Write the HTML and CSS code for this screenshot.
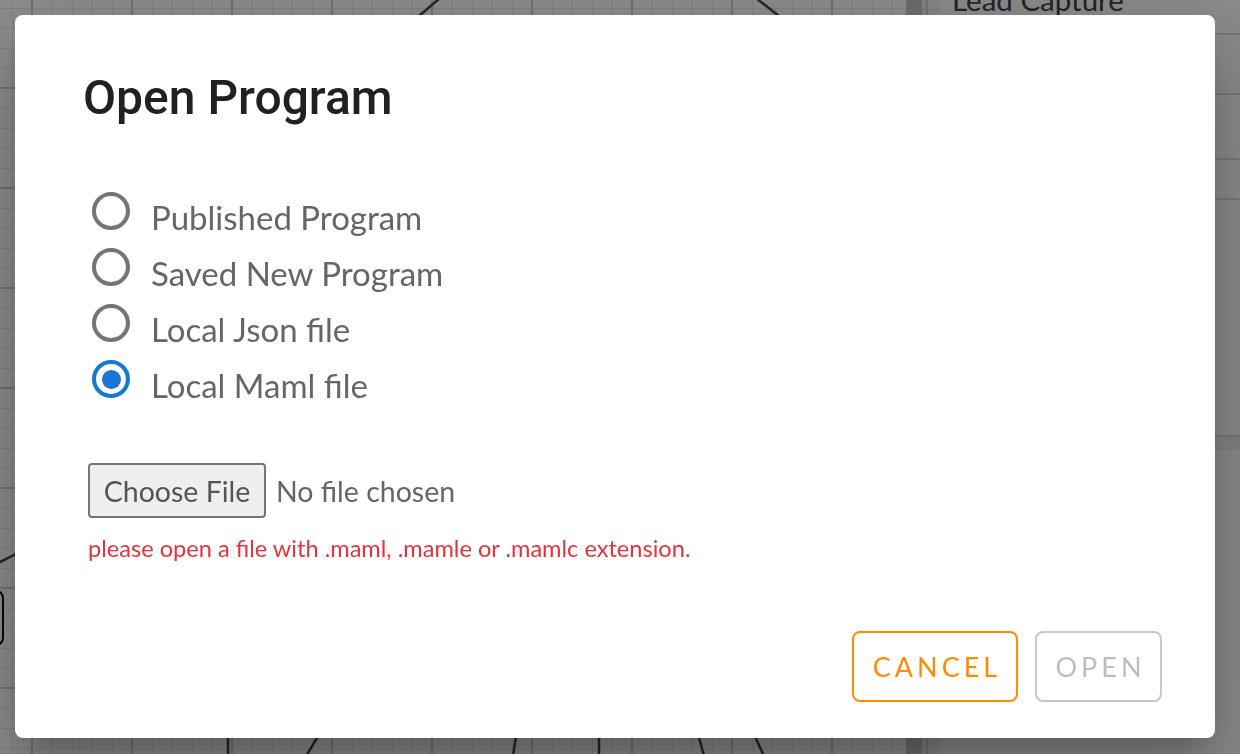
FILE: index.html
```html
<!DOCTYPE html>
<html lang="en">
<head>
<meta charset="utf-8">
<title>Open Program</title>
<link rel="stylesheet" href="styles.css">
</head>
<body>
<div class="app">
  <div class="canvas">
    <svg class="edges" width="906" height="754" viewBox="0 0 906 754">
      <line x1="412" y1="22" x2="440" y2="-2"/>
      <line x1="756" y1="-2" x2="784" y2="20"/>
      <line x1="-2" y1="563" x2="20" y2="552"/>
      <line x1="228" y1="730" x2="228" y2="756"/>
      <line x1="322" y1="730" x2="306" y2="756"/>
      <line x1="517" y1="730" x2="513" y2="756"/>
      <line x1="599" y1="730" x2="599" y2="756"/>
      <line x1="697" y1="730" x2="704" y2="756"/>
      <line x1="752" y1="730" x2="764" y2="756"/>
    </svg>
    <div class="node"></div>
  </div>
  <div class="scroll-strip"></div>
  <aside class="sidebar">
    <div class="side-title">Lead Capture</div>
    <div class="side-row r1"></div>
    <div class="side-row r2"></div>
    <div class="side-row r3"></div>
    <div class="side-row r4"></div>
    <div class="side-band"></div>
  </aside>
</div>

<div class="backdrop">
  <div class="dialog" role="dialog">
    <h2 class="title">Open Program</h2>
    <div class="radio-group">
      <label class="radio-row"><span class="radio"></span><span class="radio-label">Published Program</span></label>
      <label class="radio-row"><span class="radio"></span><span class="radio-label">Saved New Program</span></label>
      <label class="radio-row"><span class="radio"></span><span class="radio-label">Local Json file</span></label>
      <label class="radio-row"><span class="radio checked"></span><span class="radio-label">Local Maml file</span></label>
    </div>
    <div class="file-row">
      <span class="file-btn">Choose File</span>
      <span class="file-name">No file chosen</span>
    </div>
    <div class="error">please open a file with .maml, .mamle or .mamlc extension.</div>
    <div class="actions">
      <button class="btn cancel">CANCEL</button>
      <button class="btn open">OPEN</button>
    </div>
  </div>
</div>
</body>
</html>
```

FILE: styles.css
```css
* { box-sizing: border-box; }
html, body { margin: 0; padding: 0; }
body {
  width: 1240px;
  height: 754px;
  overflow: hidden;
  font-family: "Lato", "Noto Sans", sans-serif;
  background: #fbfbfb;
}
.app {
  display: flex;
  width: 1240px;
  height: 754px;
}
.canvas {
  position: relative;
  width: 906px;
  height: 754px;
  background-color: #fbfbfb;
  background-image:
    linear-gradient(to right, #cdcdcd 2px, transparent 2px),
    linear-gradient(to bottom, #cdcdcd 2px, transparent 2px),
    linear-gradient(to right, #e8e8e8 1px, transparent 1px),
    linear-gradient(to bottom, #e8e8e8 1px, transparent 1px);
  background-size: 100px 100px, 100px 100px, 20px 20px, 20px 20px;
  background-position: 31px 0, 0 87px, 12px 0, 0 8px;
}
.edges {
  position: absolute;
  left: 0;
  top: 0;
}
.edges line {
  stroke: #2f4d4d;
  stroke-width: 2.5;
}
.node {
  position: absolute;
  left: -100px;
  top: 590px;
  width: 104px;
  height: 56px;
  border: 2px solid #111;
  border-radius: 8px;
  background: #fbfbfb;
}
.scroll-strip {
  width: 34px;
  height: 754px;
  background: linear-gradient(to right, #c4c4c4 0 16px, #e9e9e9 16px 20px, #d2d2d2 20px 22px, #eeeeee 22px);
}
.sidebar {
  flex: 1;
  height: 754px;
  background: #f7f7f7;
  display: flex;
  flex-direction: column;
}
.side-title {
  flex: none;
  height: 55px;
  margin-top: -20px;
  padding-left: 12px;
  font-size: 29.5px;
  line-height: 40px;
  color: #3c4048;
  border-bottom: 2px solid #d2d5d8;
}
.side-row {
  border-bottom: 2px solid #d2d5d8;
  flex: none;
}
.r1 { height: 60px; }
.r2 { height: 65px; }
.r3 { height: 40px; }
.r4 { height: 237px; }
.side-band {
  height: 13px;
  background: #eaeaea;
}

.backdrop {
  position: fixed;
  inset: 0;
  background: rgba(0, 0, 0, 0.44);
  display: flex;
  align-items: flex-start;
  padding: 15px;
}
.dialog {
  width: 1200px;
  height: 723px;
  background: #ffffff;
  border-radius: 8px;
  box-shadow:
    0 21px 28px -13px rgba(0, 0, 0, 0.2),
    0 46px 72px 6px rgba(0, 0, 0, 0.14),
    0 17px 87px 15px rgba(0, 0, 0, 0.12);
  display: flex;
  flex-direction: column;
  padding: 55px 53px 36px 73px;
}
.title {
  margin: 0 0 0 -5px;
  font-family: "Roboto", sans-serif;
  font-weight: 500;
  font-size: 48px;
  line-height: 56px;
  color: #212121;
}
.radio-group {
  margin-top: 57px;
  display: flex;
  flex-direction: column;
  padding-left: 4px;
}
.radio-row {
  height: 56px;
  display: flex;
  align-items: center;
}
.radio {
  width: 38px;
  height: 38px;
  border: 4px solid #757575;
  border-radius: 50%;
  flex: none;
  display: flex;
  align-items: center;
  justify-content: center;
}
.radio.checked {
  border-color: #1976d2;
}
.radio.checked::after {
  content: "";
  width: 19px;
  height: 19px;
  border-radius: 50%;
  background: #1976d2;
}
.radio-label {
  margin-left: 21px;
  padding-top: 12px;
  font-size: 33px;
  line-height: 38px;
  color: #666666;
}
.file-row {
  margin-top: 56px;
  display: flex;
  align-items: center;
}
.file-btn {
  width: 178px;
  height: 55px;
  border: 2px solid #767676;
  border-radius: 4px;
  background: #efefef;
  font-size: 28.5px;
  color: #555555;
  display: flex;
  align-items: center;
  justify-content: center;
}
.file-name {
  margin-left: 10px;
  font-size: 28.5px;
  color: #666666;
}
.error {
  margin-top: 17px;
  font-size: 23.6px;
  line-height: 27px;
  color: #e5323f;
}
.actions {
  margin-top: auto;
  display: flex;
  justify-content: flex-end;
  gap: 17px;
}
.btn {
  height: 71px;
  border-radius: 8px;
  background: #ffffff;
  font-family: "Lato", sans-serif;
  font-size: 27px;
  letter-spacing: 4px;
  padding: 0 0 0 4px;
  display: flex;
  align-items: center;
  justify-content: center;
}
.cancel {
  width: 166px;
  border: 2px solid #ff8c00;
  color: #ff8c00;
}
.open {
  width: 127px;
  border: 2px solid #c8c8c8;
  color: #bdbdbd;
}
```
